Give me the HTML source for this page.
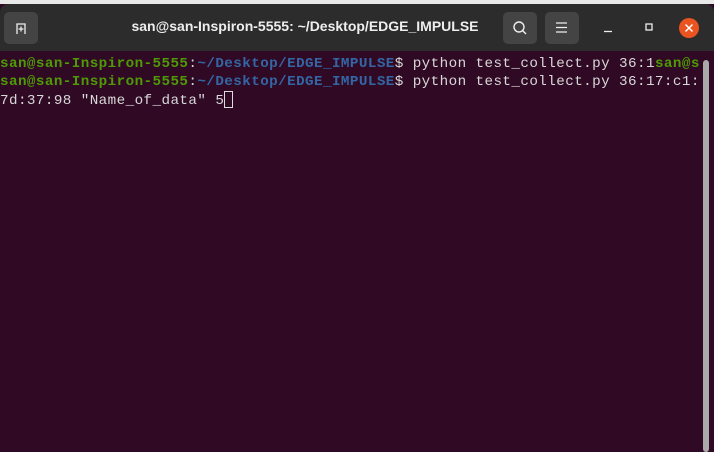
<!DOCTYPE html>
<html><head><meta charset="utf-8"><style>
html,body{margin:0;padding:0;width:714px;height:452px;overflow:hidden;background:#e9e9e9;}
.win{position:absolute;left:0;top:4px;width:714px;height:448px;background:#300a24;}
.tb{position:absolute;left:0;top:0;width:714px;height:47px;background:#2c2c2c;border-radius:8px 8px 0 0;}
.btn{position:absolute;top:8px;width:34px;height:32px;background:#444;border-radius:5px;}
.title{position:absolute;left:0;width:610px;top:14px;text-align:center;color:#eee;font:bold 14px "Liberation Sans",sans-serif;white-space:nowrap;}
.term{position:absolute;left:0;top:51px;font-family:"Liberation Mono",monospace;font-size:14.25px;line-height:18px;letter-spacing:0.42px;color:#d8d8d8;white-space:pre;}
.g{color:#4e9a06;font-weight:bold}.b{color:#3465a4;font-weight:bold}
.sb{position:absolute;left:703px;top:56px;width:6px;height:392px;background:#aaa;border-radius:3px;}
</style></head><body>
<div class="win">
<div class="tb">
 <div class="btn" style="left:4px"><svg width="34" height="32"><path d="M13 22V12h8v10M17 14.5v5M14.5 17h5" stroke="#eee" stroke-width="1.3" fill="none"/></svg></div>
 <div class="title">san@san-Inspiron-5555: ~/Desktop/EDGE_IMPULSE</div>
 <div class="btn" style="left:503px"><svg width="34" height="32"><circle cx="16" cy="15" r="5" stroke="#eee" stroke-width="1.4" fill="none"/><path d="M19.5 18.5L23 22" stroke="#eee" stroke-width="1.4"/></svg></div>
 <div class="btn" style="left:545px"><svg width="34" height="32"><path d="M11 11h11M11 15.5h11M11 20h11" stroke="#eee" stroke-width="1.2"/></svg></div>
 <svg style="position:absolute;left:600px;top:12px" width="100" height="24"><path d="M4 15.5h8" stroke="#eee" stroke-width="1.3"/><rect x="46" y="8" width="6" height="6" stroke="#eee" stroke-width="1.3" fill="none"/><circle cx="89" cy="12" r="10" fill="#e95420"/><path d="M85.5 8.5l7 7M92.5 8.5l-7 7" stroke="#fff" stroke-width="1.5"/></svg>
</div>
<div class="term"><span class="g">san@san-Inspiron-5555</span>:<span class="b">~/Desktop/EDGE_IMPULSE</span>$ python test_collect.py 36:1<span class="g">san@s</span>
<span class="g">san@san-Inspiron-5555</span>:<span class="b">~/Desktop/EDGE_IMPULSE</span>$ python test_collect.py 36:17:c1:
7d:37:98 "Name_of_data" 5<span style="display:inline-block;width:9px;height:17px;border:1px solid #ddd;vertical-align:-4px;box-sizing:border-box"></span></div>
<div class="sb"></div>
</div>
</body></html>
